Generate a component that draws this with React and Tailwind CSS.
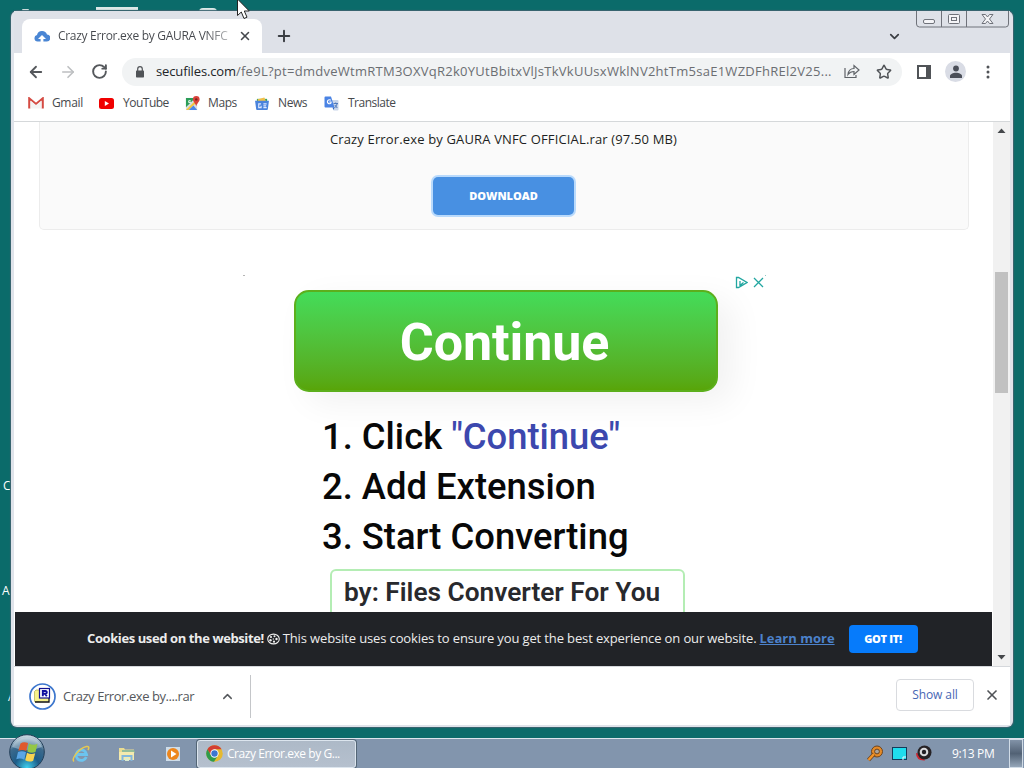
import React from 'react';
import { ArrowLeft, ArrowRight, RotateCw, ChevronDown, ChevronUp, Star, X, Plus } from 'lucide-react';

const FONT = "font-['Open_Sans','Noto_Sans',sans-serif]";

const CloudIcon = () => (
  <svg width="16" height="12" viewBox="0 0 16 12">
    <path d="M4 11.5H3.5A3.3 3.3 0 0 1 3 5 5.2 5.2 0 0 1 13 4.6 3.4 3.4 0 0 1 12.6 11.5H11Z" fill="#4a86d4" />
    <path d="M8 5 12 9H9.4V12H6.6V9H4Z" fill="#fff" />
  </svg>
);

const GmailIcon = () => (
  <svg width="16" height="12" viewBox="0 0 16 12">
    <path d="M1.3 11.5V1.5L8 7l6.7-5.5v10" fill="none" stroke="#d54b43" strokeWidth="2.2" />
    <path d="M2.5 3.5v8h11v-8L8 8Z" fill="#f3f3f3" />
  </svg>
);

const YouTubeIcon = () => (
  <svg width="15" height="11" viewBox="0 0 15 11">
    <rect width="15" height="11" rx="2.5" fill="#f00000" />
    <path d="M5.8 3v5L10 5.5Z" fill="#fff" />
  </svg>
);

const MapsIcon = () => (
  <svg width="15" height="15" viewBox="0 0 16 16">
    <path d="M1 2h12v13H1Z" fill="#d9dde0" />
    <path d="M1 2h10L1 12Z" fill="#2b9d58" />
    <path d="M1 15 13 3v3L4 15Z" fill="#f3c63f" />
    <path d="M4 15 9 10l4 5Z" fill="#4a86e8" />
    <path d="M12 0a3.6 3.6 0 0 1 3.600 3.600C15.600 6 12.700 7.500 12 11 11.300 7.500 8.400 6 8.400 3.600A3.600 3.600 0 0 1 12 0Z" fill="#d9423a" />
    <circle cx="12" cy="3.600" r="1.300" fill="#7c201d" />
    <path d="M6 5H4v2h2V6" fill="none" stroke="#fff" />
  </svg>
);

const NewsIcon = () => (
  <svg width="14" height="13" viewBox="0 0 15 14">
    <path d="M2 2h11v6H2Z" fill="#3aa45c" />
    <path d="M3 2.500 10 .5 12 5H3Z" fill="#f1c04a" />
    <path d="M0 4h15l-1.200 9a1 1 0 0 1-1 1H2.200a1 1 0 0 1-1-1Z" fill="#4a83dc" />
    <path d="M6.500 7.500H4v4h2.500V9.500M9 7.500h3.500M9 11.500h3.500M9 9.500h3" fill="none" stroke="#dce8ff" strokeWidth="1.300" />
  </svg>
);

const TranslateIcon = () => (
  <svg width="15" height="15" viewBox="0 0 15 15">
    <path d="M7 4h6.500a1 1 0 0 1 1 1v8.500a1 1 0 0 1-1 1H9.500Z" fill="#c9d6ea" />
    <path d="M1.500.5H7l3.500 11h-9a1 1 0 0 1-1-1v-9a1 1 0 0 1 1-1Z" fill="#4a83e4" />
    <path d="M6.800 4.300A2 2 0 1 0 7 7V6H5.300" fill="none" stroke="#fff" strokeWidth="1.200" />
    <path d="M8.500 11.500h2L9.500 14Z" fill="#2f62bd" />
    <path d="M9.500 7.500h4.500M11.700 6.500v1M13 8c-.5 2-1.500 3-2.500 4M10.800 9l2.500 3" fill="none" stroke="#4f79bc" />
  </svg>
);

const ShareIcon = () => (
  <svg width="16" height="15" viewBox="0 0 16 15" fill="none" stroke="#5f6368" strokeWidth="1.200">
    <path d="M1 4v9.500h11V11" />
    <path d="M4 10.500C4.500 6.500 7 4.500 10 4.500V1.500l5 4.500-5 4.500V7.500C7.500 7.500 5.500 8.500 4 10.500Z" />
  </svg>
);

const LockIcon = () => (
  <svg width="10" height="12" viewBox="0 0 10 12">
    <rect x="1" y="4.500" width="8" height="7" rx=".7" fill="#505357" />
    <path d="M2.700 5V3a2.300 2.300 0 0 1 4.600 0v2" fill="none" stroke="#505357" strokeWidth="1.200" />
  </svg>
);

const UserIcon = () => (
  <svg width="14" height="14" viewBox="0 0 14 14" fill="#4b4f59">
    <circle cx="7" cy="3.500" r="2.900" />
    <path d="M1 13v-2c0-2 3-3.300 6-3.300s6 1.300 6 3.300v2Z" />
  </svg>
);

const CookieIcon = () => (
  <svg width="13" height="12" viewBox="0 0 13 12" className="shrink-0">
    <ellipse cx="6.500" cy="6" rx="5.800" ry="4.900" fill="none" stroke="#eee" strokeWidth="1.100" />
    <g fill="#eee">
      <circle cx="4" cy="4" r="1.100" />
      <circle cx="7.500" cy="3.200" r="1" />
      <circle cx="9.500" cy="6" r="1.200" />
      <circle cx="3.500" cy="7.300" r="1.200" />
      <circle cx="7" cy="8.700" r="1.100" />
      <circle cx="6.300" cy="6" r=".7" />
    </g>
  </svg>
);

const RarIcon = () => (
  <svg width="27" height="27" viewBox="0 0 27 27">
    <circle cx="13.500" cy="13.500" r="12.500" fill="#fff" stroke="#3c76cd" strokeWidth="1.700" />
    <path d="M5.500 8.500 7 7h4v11.500H5.500Z" fill="#f6f18a" stroke="#b9b65c" strokeWidth=".8" />
    <path d="M10 14h9.500v4.500H10Z" fill="#f6f18a" />
    <path d="M6 19h14V14" fill="none" stroke="#111" strokeWidth="1.300" />
    <rect x="10.500" y="5.500" width="10" height="9.500" fill="#fff" stroke="#101090" strokeWidth="1.200" />
    <path d="M13.800 13.200V8h2.700a1.300 1.300 0 0 1 0 2.700h-2.700M16 10.700l1.800 2.500" fill="none" stroke="#1010a0" strokeWidth="1.900" />
  </svg>
);

const StartOrb = () => (
  <svg width="36" height="36" viewBox="0 0 36 36">
    <defs>
      <radialGradient id="orb" cx=".5" cy=".95" r=".9">
        <stop offset="0" stopColor="#3fd0ee" />
        <stop offset=".4" stopColor="#1d5c88" />
        <stop offset=".75" stopColor="#3d6a8c" />
        <stop offset="1" stopColor="#c2d3dd" />
      </radialGradient>
    </defs>
    <circle cx="18" cy="18" r="17.300" fill="url(#orb)" stroke="#233e57" />
    <path d="M3 13A15.500 13 0 0 1 33 13Q18 19 3 13Z" fill="#dce8ef" opacity=".4" />
    <path d="M11.500 9.500q3-2.200 7.500-.5l-1.700 8q-4-2-8-.2Z" fill="#e0592c" />
    <path d="M20 9.500q4 2.200 8.500.3L26.500 18q-4 1.800-8.200-.5Z" fill="#94c746" />
    <path d="M9 18q4-1.800 8 .2l-1.700 7.500q-4-2.200-8-.5Z" fill="#5aa5e4" />
    <path d="M18 18.700q4 2.200 8.200.5l-2 7.500q-4 2-8-.5Z" fill="#f8d351" />
  </svg>
);

const IeIcon = () => (
  <svg width="18" height="18" viewBox="0 0 18 18" fill="none">
    <path d="M14.300 12A5.300 5.300 0 1 1 14.600 9.500H5" stroke="#6cc4ef" strokeWidth="2.800" />
    <path d="M2 16.500C-1 14 7 3 14.500 1.500c3-.5 2.500 2 1.500 3.500" stroke="#e8c94f" strokeWidth="1.500" />
  </svg>
);

const FolderIcon = () => (
  <svg width="18" height="16" viewBox="0 0 18 16">
    <path d="M1 2h5l1 1.500h9V14H1Z" fill="#e9dc91" />
    <path d="M4 4h12l1 3H4Z" fill="#93bd9a" />
    <path d="M1 6h15v8H1Z" fill="#f3eaae" />
    <path d="M4.500 15v-5h9v5" fill="none" stroke="#83b8dc" strokeWidth="2" />
    <path d="M7 12h4v3H7Z" fill="#d9ecd0" />
  </svg>
);

const MediaIcon = () => (
  <svg width="16" height="16" viewBox="0 0 16 16">
    <rect x="1" y="1" width="14" height="14" fill="#cfdde9" />
    <circle cx="8" cy="8" r="6" fill="#ed861d" />
    <path d="M6 4.500v7l5.500-3.500Z" fill="#fff" />
  </svg>
);

const ChromeIcon = () => (
  <svg width="17" height="17" viewBox="0 0 16 16">
    <circle cx="8" cy="8" r="7.800" fill="#e5b92f" />
    <path d="M1.300 4A7.800 7.800 0 0 1 14.700 4H8L5 10Z" fill="#d33e32" />
    <path d="M1.300 4A7.800 7.800 0 0 0 7.500 15.800L10.500 11 5 10Z" fill="#2f9b4c" />
    <circle cx="8" cy="8" r="3.900" fill="#fff" />
    <circle cx="8" cy="8" r="3" fill="#3d76cf" />
  </svg>
);

const WindowButtons = () => (
  <svg width="94" height="18" viewBox="0 0 94 18" fill="none" stroke="#6f727a">
    <path d="M.5 0v13q0 3 3 3h86q3 0 3-3V0M25.500 0v16M50.500 0v16" />
    <rect x="7.500" y="8.500" width="11" height="4" rx="1.500" fill="#f4f4f7" />
    <rect x="32.500" y="3.500" width="11" height="9" rx="1" fill="#f4f4f7" />
    <rect x="35.500" y="6.500" width="5" height="3" />
    <path d="M66 3.500h3.500L71.500 6l2-2.500H77L73.500 8l3.500 4.500h-3.500L71.500 10l-2 2.500H66L69.500 8Z" fill="#f4f4f7" />
  </svg>
);

const bookmarks = [
  { name: 'Gmail', icon: <GmailIcon />, style: 'w-[71px] gap-[8px]', text: 'tracking-[-0.35px]' },
  { name: 'YouTube', icon: <YouTubeIcon />, style: 'w-[86px] gap-[9px]', text: 'tracking-[-0.5px]' },
  { name: 'Maps', icon: <MapsIcon />, style: 'w-[70px] gap-[8px]', text: 'tracking-[-0.4px]' },
  { name: 'News', icon: <NewsIcon />, style: 'w-[69px] gap-[9px]', text: 'tracking-[-0.4px]' },
  { name: 'Translate', icon: <TranslateIcon />, style: 'w-[90px] gap-[9px]', text: 'tracking-[-0.5px]' },
];

const TabStrip = () => (
  <div className="relative flex h-[42px] shrink-0 items-end bg-[#dee1e8] pl-[8px]">
    <div className="flex h-[34px] w-[240px] items-center rounded-t-lg bg-white pl-[12px]">
      <CloudIcon />
      <span className="ml-[8px] w-[172px] overflow-hidden whitespace-nowrap bg-linear-to-r from-[#45484d] from-85% to-[#c3c4c6] bg-clip-text text-[12px] tracking-[-0.3px] text-transparent">
        Crazy Error.exe by GAURA VNFC
      </span>
      <X size={14} strokeWidth={2.6} color="#45484d" className="ml-[8px]" />
    </div>
    <Plus size={18} strokeWidth={2.6} color="#3b3e43" className="mb-[8px] ml-[13px]" />
    <ChevronDown size={15} strokeWidth={2.8} color="#3b3e43" className="mb-[9px] ml-auto mr-[108px]" />
    <div className="absolute right-0 top-0"><WindowButtons /></div>
  </div>
);

const Toolbar = () => (
  <div className="flex h-[37px] shrink-0 items-center bg-white pl-[13px]">
    <ArrowLeft size={18} strokeWidth={2.4} color="#55585c" />
    <ArrowRight size={18} strokeWidth={2.2} color="#bdbfc1" className="ml-[14px]" />
    <RotateCw size={17} strokeWidth={2.7} color="#55585c" className="ml-[14px]" />
    <div className="ml-[14px] flex h-[28px] w-[780px] items-center rounded-full bg-[#f1f3f4] pl-[13px]">
      <LockIcon />
      <span className="ml-[11px] w-[679px] whitespace-nowrap text-[13px] tracking-[0.27px] text-[#6b6e72]">
        <span className="tracking-[-0.13px] text-[#222428]">secufiles.com</span>
        /fe9L?pt=dmdveWtmRTM3OXVqR2k0YUtBbitxVlJsTkVkUUsxWklNV2htTm5saE1WZDFhREl2V25...
      </span>
      <span className="ml-[9px]"><ShareIcon /></span>
      <Star size={16} strokeWidth={2.2} color="#505357" className="ml-[16px]" />
    </div>
    <svg width="14" height="14" viewBox="0 0 14 14" className="ml-[15px]">
      <path d="M1 1h12v12H1Z" fill="#fff" stroke="#505357" strokeWidth="2" />
      <path d="M9 1h4v12H9Z" fill="#505357" />
    </svg>
    <div className="ml-[14px] flex h-[21px] w-[21px] items-center justify-center rounded-full bg-[#d9dce5]"><UserIcon /></div>
    <svg width="4" height="14" viewBox="0 0 4 14" fill="#505357" className="ml-[20px]">
      <circle cx="2" cy="2" r="1.500" />
      <circle cx="2" cy="7" r="1.500" />
      <circle cx="2" cy="12" r="1.500" />
    </svg>
  </div>
);

const BookmarkBar = () => (
  <div className="flex h-[32px] shrink-0 items-center border-b border-[#d5d8da] bg-white pb-[5px] pl-[14px] text-[12px] text-[#46494d]">
    {bookmarks.map((b) => (
      <div key={b.name} className={`flex shrink-0 items-center ${b.style}`}>
        {b.icon}
        <span className={b.text}>{b.name}</span>
      </div>
    ))}
  </div>
);

const Ad = () => (
  <div className="relative mx-auto h-[340px] w-[524px] font-['Roboto',sans-serif]">
    <div className="absolute -top-px left-px h-px w-[2px] bg-[#b5b5b5]" />
    <div className="absolute -top-px right-0 h-px w-px bg-[#8fc9c6]" />
    <div className="absolute right-[2px] top-0 flex items-center gap-[5px]">
      <svg width="13" height="13" viewBox="0 0 13 13" fill="none" stroke="#22a6a0" strokeWidth="1.300">
        <path d="M1.500 1.500v10h2l8.500-5-8.500-5ZM5 5v4.500l3.500-3" />
      </svg>
      <svg width="11" height="11" viewBox="0 0 11 11" stroke="#22a6a0" strokeWidth="1.300">
        <path d="m1 1 9 9M10 1l-9 9" />
      </svg>
    </div>
    <div className="pl-[52px] pt-[14px]">
      <div className="flex h-[102px] w-[424px] items-center justify-center rounded-[15px] border-2 border-[#5caf1c] bg-linear-to-b from-[#43dc59] to-[#58a508] pr-[3px] pt-[4px] text-[52px] font-bold tracking-[-0.1px] text-white shadow-[14px_10px_34px_rgba(0,0,0,0.06)]">
        Continue
      </div>
      <ol className="ml-[28px] mt-[20px] whitespace-nowrap text-[36.4px] font-medium leading-[50px] text-[#080808]">
        <li>1. Click <span className="text-[#3c48ae]">"Continue"</span></li>
        <li>2. Add Extension</li>
        <li>3. Start Converting</li>
      </ol>
      <div className="ml-[36px] mt-[7px] h-[60px] w-[355px] whitespace-nowrap rounded-[6px] border-2 border-[#b4edb4] pl-[12px] text-[26.25px] font-semibold leading-[42px] text-[#28292d]">
        by: Files Converter For You
      </div>
    </div>
  </div>
);

const CookieBar = () => (
  <div className="absolute bottom-0 left-px flex h-[54px] w-[977px] items-center whitespace-nowrap bg-[#212327] pl-[72px] text-[13px] text-[#ececec]">
    <b className="mr-[3px] tracking-[-0.4px]">Cookies used on the website!</b>
    <CookieIcon />
    <span className="ml-[3px] mr-[3px] tracking-[-0.13px]">This website uses cookies to ensure you get the best experience on our website.</span>
    <a href="#" className="font-bold text-[#4c82cc] underline">Learn more</a>
    <button className="ml-[14px] h-[28px] w-[69px] rounded-[4px] bg-[#067bfb] text-[11px] font-extrabold tracking-[-0.3px] text-white">GOT IT!</button>
  </div>
);

const Scrollbar = () => (
  <div className="flex w-[17px] shrink-0 flex-col items-center bg-[#f1f1f1]">
    <svg width="9" height="5" viewBox="0 0 9 5" className="mt-[6px]"><path d="M.5 5h8l-4-4.500Z" fill="#45484b" /></svg>
    <div className="mt-[139px] h-[121px] w-[13px] bg-[#c1c1c1]" />
    <svg width="9" height="5" viewBox="0 0 9 5" className="mb-[6px] mt-auto"><path d="M.5 0h8l-4 4.500Z" fill="#45484b" /></svg>
  </div>
);

const Page = () => (
  <div className="relative flex h-[544px] shrink-0 overflow-hidden bg-white">
    <div className="w-[979px] shrink-0 pl-[25px]">
      <div className="flex h-[108px] w-[930px] flex-col items-center rounded-b-[5px] border border-t-0 border-[#ececec] bg-[#fafafa] pr-px">
        <p className="mt-[7px] whitespace-nowrap text-[13px] font-medium leading-[20px] tracking-[0.15px] text-[#1d1f22]">Crazy Error.exe by GAURA VNFC OFFICIAL.rar (97.50 MB)</p>
        <button className="mt-[28px] h-[38px] w-[141px] rounded-[5px] bg-[#4890e2] text-[11px] font-extrabold text-white shadow-[0_0_0_2px_#b9dafc]">DOWNLOAD</button>
      </div>
      <div className="w-[930px] pt-[46px]"><Ad /></div>
    </div>
    <Scrollbar />
    <CookieBar />
  </div>
);

const DownloadShelf = () => (
  <div className="flex flex-1 items-center border-t border-[#d5d8dc] bg-white pl-[15px] pt-[1px]">
    <RarIcon />
    <span className="ml-[7px] w-[147px] whitespace-nowrap text-[13px] tracking-[-0.43px] text-[#55585c]">Crazy Error.exe by....rar</span>
    <ChevronUp size={15} strokeWidth={2.3} color="#55585c" className="ml-[10px]" />
    <div className="ml-[15px] h-[43px] w-px bg-[#c4c6c9]" />
    <button className="mb-[3px] ml-auto h-[32px] w-[78px] rounded-[4px] border border-[#d9dbdf] text-[12px] font-medium tracking-[-0.1px] text-[#4766b4]">Show all</button>
    <X size={16} strokeWidth={2.5} color="#505357" className="mb-[3px] ml-[10px] mr-[10px]" />
  </div>
);

const Taskbar = () => (
  <div className="flex h-[30px] items-center border-t border-[#dbe4ec] bg-[#8295ad] pl-[9px]">
    <div className="-mt-[4px] h-[36px] w-[36px] shrink-0"><StartOrb /></div>
    <div className="ml-[27px]"><IeIcon /></div>
    <div className="ml-[28px]"><FolderIcon /></div>
    <div className="ml-[29px]"><MediaIcon /></div>
    <div className="ml-[16px] flex h-[28px] w-[159px] items-center rounded-[3px] border border-[#dce5ee] bg-linear-to-b from-[#adb9c7] to-[#b5c0ce] pl-[8px] shadow-[0_0_0_1px_#536575]">
      <ChromeIcon />
      <span className="ml-[4px] whitespace-nowrap text-[12px] tracking-[-0.45px] text-white">Crazy Error.exe by G...</span>
    </div>
    <div className="ml-auto flex items-center gap-[8px]">
      <svg width="17" height="17" viewBox="0 0 17 17">
        <circle cx="10" cy="6.500" r="5.500" fill="#e48a27" stroke="#6b4420" />
        <path d="m7 9-5.500 6" stroke="#6b4420" strokeWidth="4" />
        <path d="m7 9-5.500 6" stroke="#f29429" strokeWidth="2.500" />
        <circle cx="10" cy="6.500" r="2.400" fill="#a9a49e" stroke="#6b4420" />
      </svg>
      <svg width="15" height="14" viewBox="0 0 15 14">
        <rect x=".5" y=".5" width="14" height="12" fill="#20dced" stroke="#153b5b" />
        <path d="M11 13v-3h3" stroke="#e8f8ff" fill="none" />
      </svg>
      <svg width="17" height="17" viewBox="0 0 17 17">
        <path d="M1 8q0 8 9 7.500L6 9Z" fill="#cc2732" />
        <circle cx="9.500" cy="7.500" r="7" fill="#262225" />
        <circle cx="9" cy="7" r="4.300" fill="#d9d9dc" />
        <circle cx="9" cy="7" r="2.200" fill="#221f24" />
      </svg>
    </div>
    <span className="ml-[20px] w-[43px] whitespace-nowrap text-[12px] tracking-[-0.35px] text-white">9:13 PM</span>
    <div className="ml-[14px] mr-px h-[29px] w-[14px] border border-[#d1dce7] bg-linear-to-b from-[#8293a8] via-[#526275] to-[#95a6b9]" />
  </div>
);

const Desktop = () => (
  <>
    <div className="absolute left-[96px] top-[7px] h-[3px] w-[42px] bg-[#dce8e7]" />
    <div className="absolute left-[22px] top-[9px] h-[2px] w-[7px] rounded-full bg-[#dce8e7]" />
    <div className="absolute left-[199px] top-[8px] h-[4px] w-[18px] rounded-t-full bg-[#dce8e7]" />
    <span className="absolute left-[3px] top-[477px] text-[12px] text-white">C</span>
    <span className="absolute left-[2px] top-[582px] text-[12px] text-white">A</span>
    <span className="absolute left-[8px] top-[688px] text-[12px] text-white">A</span>
  </>
);

const App = () => (
  <div className={`relative flex h-[768px] w-[1024px] flex-col overflow-hidden bg-[#0b6b6a] ${FONT}`}>
    <Desktop />
    <div className="relative ml-[11px] mt-[11px] flex h-[716px] w-[1002px] flex-col rounded-[6px] border-x-[3px] border-b-[2px] border-[#dfe3ea] bg-[#dee1e8] shadow-[0_0_1px_1px_#3c6471]">
      <TabStrip />
      <Toolbar />
      <BookmarkBar />
      <Page />
      <DownloadShelf />
    </div>
    <div className="relative mt-auto"><Taskbar /></div>
    <svg width="14" height="21" viewBox="0 0 14 21" className="absolute left-[237px] top-0">
      <path d="M.5-1v16.500L4.300 12l2.700 6.500 3-1.300L7.300 11h5Z" fill="#fff" stroke="#222" />
    </svg>
  </div>
);

export default App;
